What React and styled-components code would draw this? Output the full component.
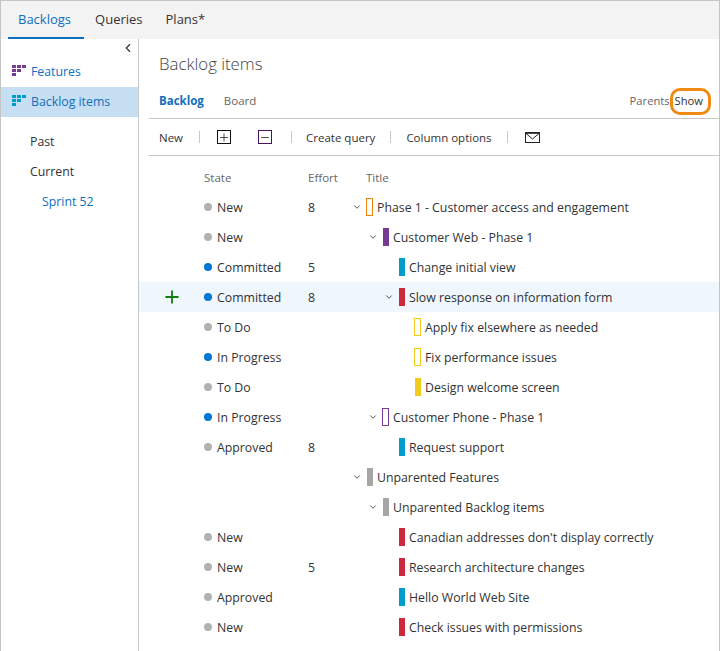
import React from 'react';
import styled, { createGlobalStyle } from 'styled-components';
import { ChevronDown, ChevronLeft, Plus, Minus } from 'lucide-react';

const GlobalStyle = createGlobalStyle`
  html, body {
    margin: 0;
    padding: 0;
    background: #fff;
  }
  * {
    box-sizing: border-box;
  }
`;

const Page = styled.div`
  width: 720px;
  height: 651px;
  overflow: hidden;
  display: flex;
  flex-direction: column;
  border: 1px solid #c4c4c4;
  border-bottom: none;
  font-family: "Open Sans", "Noto Sans", sans-serif;
  font-size: 12.3px;
  color: #333;
`;

const TopBar = styled.div`
  height: 38px;
  flex: none;
  display: flex;
  padding-left: 7px;
  background: #f3f3f3;
`;

const TopTab = styled.div`
  height: 38px;
  padding: ${(p) => (p.$active ? '0 13px 0 10px' : '0 12px 0 11px')};
  display: flex;
  align-items: center;
  font-size: 13px;
  color: ${(p) => (p.$active ? '#106ebe' : '#333')};
  border-bottom: 2px solid ${(p) => (p.$active ? '#106ebe' : 'transparent')};
`;

const Body = styled.div`
  flex: 1;
  display: flex;
  min-height: 0;
`;

const Sidebar = styled.div`
  width: 138px;
  flex: none;
  border-right: 1px solid #c8c8c8;
`;

const Collapse = styled.div`
  height: 18px;
  padding-right: 3px;
  display: flex;
  align-items: center;
  justify-content: flex-end;
  color: #333;
`;

const NavItem = styled.div`
  height: 30px;
  padding: 0 0 2px 11px;
  display: flex;
  align-items: center;
  gap: 4px;
  color: #106ebe;
  background: ${(p) => (p.$active ? '#c7dff3' : 'transparent')};
`;

const NavIcon = styled.svg`
  width: 15px;
  height: 12px;
  flex: none;
  fill: ${(p) => p.$color};
`;

const SprintList = styled.div`
  margin-top: 9px;
`;

const SprintItem = styled.div`
  height: 30px;
  display: flex;
  align-items: center;
  padding-left: ${(p) => p.$indent}px;
  color: ${(p) => (p.$link ? '#106ebe' : '#333')};
`;

const Main = styled.div`
  flex: 1;
  min-width: 0;
  position: relative;
`;

const PageTitle = styled.div`
  height: 49px;
  padding: 13px 0 0 20px;
  font-size: 16.8px;
  font-weight: 300;
  color: #444;
`;

const PivotBar = styled.div`
  height: 31px;
  margin-left: 10px;
  padding: 0 16px 5px 10px;
  display: flex;
  align-items: center;
  border-bottom: 1px solid #c8c8c8;
`;

const Pivot = styled.div`
  margin-right: 20px;
  font-size: 11.5px;
  font-weight: ${(p) => (p.$active ? 700 : 400)};
  color: ${(p) => (p.$active ? '#106ebe' : '#666')};
`;

const PivotRight = styled.div`
  margin-left: auto;
  display: flex;
  gap: 5px;
  font-size: 11.2px;
  color: #666;
`;

const ShowValue = styled.span`
  color: #333;
`;

const ShowRing = styled.div`
  position: absolute;
  left: 531px;
  top: 49px;
  width: 41px;
  height: 27px;
  border: 3px solid #ef8a12;
  border-radius: 10px;
`;

const Toolbar = styled.div`
  height: 37px;
  margin-left: 10px;
  padding-left: 10px;
  display: flex;
  align-items: center;
  border-bottom: 1px solid #c8c8c8;
  font-size: 11.5px;
  color: #333;
`;

const ToolSep = styled.div`
  width: 1px;
  height: 12px;
  margin: 0 ${(p) => p.$right}px 0 ${(p) => p.$left}px;
  background: #c8c8c8;
`;

const BoxIcon = styled.div`
  width: 14px;
  height: 14px;
  margin-right: ${(p) => p.$gap || 0}px;
  display: flex;
  align-items: center;
  justify-content: center;
  border: 1px solid ${(p) => p.$color};
  color: #222;
`;

const MailIcon = styled.svg`
  width: 15px;
  height: 11px;
  fill: none;
  stroke: #222;
`;

const Grid = styled.div`
  padding-top: 6px;
`;

const Row = styled.div`
  height: 30px;
  display: grid;
  grid-template-columns: 65px 104px 44px 1fr;
  align-items: center;
  background: ${(p) => (p.$hover ? '#eff6fc' : 'transparent')};
  color: ${(p) => (p.$head ? '#666' : '#333')};
  font-size: ${(p) => (p.$head ? '11.5px' : '12.3px')};
`;

const AddCell = styled.div`
  padding-left: 23px;
  display: flex;
  color: #107c10;
`;

const StateCell = styled.div`
  display: flex;
  align-items: center;
  gap: 5px;
`;

const Dot = styled.span`
  width: 8px;
  height: 8px;
  border-radius: 50%;
  background: ${(p) => (p.$active ? '#0078d4' : '#b2b2b2')};
`;

const HeadTitle = styled.div`
  padding-left: 14px;
`;

const TitleCell = styled.div`
  display: flex;
  align-items: center;
  padding-left: ${(p) => p.$level * 16}px;
  white-space: nowrap;
`;

const Twisty = styled.div`
  width: 10px;
  margin-right: 5px;
  flex: none;
  display: flex;
  justify-content: center;
  color: #333;
`;

const TypeBar = styled.span`
  width: ${(p) => (p.$outline ? 7 : 6)}px;
  height: 18px;
  margin: 0 4px 0 ${(p) => (p.$outline ? -1 : 0)}px;
  flex: none;
  background: ${(p) => (p.$outline ? 'transparent' : p.$color)};
  border: ${(p) => (p.$outline ? `1px solid ${p.$color}` : 'none')};
`;

const ORANGE = '#f2820c';
const PURPLE = '#773b93';
const BLUE = '#009ccc';
const RED = '#cc293d';
const YELLOW = '#f2cb1d';
const GREY = '#a6a6a6';

const rows = [
  { state: 'New', effort: '8', level: 0, open: true, color: ORANGE, outline: true, title: 'Phase 1 - Customer access and engagement' },
  { state: 'New', level: 1, open: true, color: PURPLE, title: 'Customer Web - Phase 1' },
  { state: 'Committed', active: true, effort: '5', level: 2, color: BLUE, title: 'Change initial view' },
  { state: 'Committed', active: true, effort: '8', level: 2, open: true, hover: true, color: RED, title: 'Slow response on information form' },
  { state: 'To Do', level: 3, color: YELLOW, outline: true, title: 'Apply fix elsewhere as needed' },
  { state: 'In Progress', active: true, level: 3, color: YELLOW, outline: true, title: 'Fix performance issues' },
  { state: 'To Do', level: 3, color: YELLOW, title: 'Design welcome screen' },
  { state: 'In Progress', active: true, level: 1, open: true, color: PURPLE, outline: true, title: 'Customer Phone - Phase 1' },
  { state: 'Approved', effort: '8', level: 2, color: BLUE, title: 'Request support' },
  { level: 0, open: true, color: GREY, title: 'Unparented Features' },
  { level: 1, open: true, color: GREY, title: 'Unparented Backlog items' },
  { state: 'New', level: 2, color: RED, title: "Canadian addresses don't display correctly" },
  { state: 'New', effort: '5', level: 2, color: RED, title: 'Research architecture changes' },
  { state: 'Approved', level: 2, color: BLUE, title: 'Hello World Web Site' },
  { state: 'New', level: 2, color: RED, title: 'Check issues with permissions' },
];

const BacklogIcon = ({ color }) => (
  <NavIcon viewBox="0 0 15 12" $color={color}>
    <rect x="0" y="0" width="4" height="3" />
    <rect x="5" y="0" width="4" height="3" />
    <rect x="10" y="0" width="4" height="3" />
    <rect x="0" y="4" width="4" height="3" />
    <rect x="5" y="4" width="4" height="3" />
    <rect x="0" y="8" width="4" height="3" />
  </NavIcon>
);

export default function App() {
  return (
    <Page>
      <GlobalStyle />
      <TopBar>
        <TopTab $active>Backlogs</TopTab>
        <TopTab>Queries</TopTab>
        <TopTab>Plans*</TopTab>
      </TopBar>
      <Body>
        <Sidebar>
          <Collapse>
            <ChevronLeft size={14} strokeWidth={2} />
          </Collapse>
          <NavItem>
            <BacklogIcon color="#773b93" />
            Features
          </NavItem>
          <NavItem $active>
            <BacklogIcon color="#009ccc" />
            Backlog items
          </NavItem>
          <SprintList>
            <SprintItem $indent={29}>Past</SprintItem>
            <SprintItem $indent={29}>Current</SprintItem>
            <SprintItem $indent={41} $link>Sprint 52</SprintItem>
          </SprintList>
        </Sidebar>
        <Main>
          <PageTitle>Backlog items</PageTitle>
          <PivotBar>
            <Pivot $active>Backlog</Pivot>
            <Pivot>Board</Pivot>
            <PivotRight>
              Parents
              <ShowValue>Show</ShowValue>
            </PivotRight>
          </PivotBar>
          <ShowRing />
          <Toolbar>
            New
            <ToolSep $left={16} $right={17} />
            <BoxIcon $color="#111" $gap={27}><Plus size={13} strokeWidth={1.6} /></BoxIcon>
            <BoxIcon $color="#4b1260"><Minus size={13} strokeWidth={1.6} /></BoxIcon>
            <ToolSep $left={19} $right={14} />
            Create query
            <ToolSep $left={15} $right={15} />
            Column options
            <ToolSep $left={15} $right={17} />
            <MailIcon viewBox="0 0 15 11">
              <rect x="0.5" y="0.5" width="14" height="10" strokeWidth="1" />
              <path d="M0.5 1 L7.5 7 L14.5 1" strokeWidth="1" />
              <path d="M0 1 H15" strokeWidth="1.6" />
            </MailIcon>
          </Toolbar>
          <Grid>
            <Row $head>
              <span />
              <span>State</span>
              <span>Effort</span>
              <HeadTitle>Title</HeadTitle>
            </Row>
            {rows.map((row) => (
              <Row key={row.title} $hover={row.hover}>
                <AddCell>{row.hover && <Plus size={20} strokeWidth={2.2} />}</AddCell>
                <StateCell>
                  {row.state && <Dot $active={row.active} />}
                  {row.state}
                </StateCell>
                <span>{row.effort}</span>
                <TitleCell $level={row.level}>
                  <Twisty>{row.open && <ChevronDown size={14} strokeWidth={2} />}</Twisty>
                  <TypeBar $color={row.color} $outline={row.outline} />
                  {row.title}
                </TitleCell>
              </Row>
            ))}
          </Grid>
        </Main>
      </Body>
    </Page>
  );
}
